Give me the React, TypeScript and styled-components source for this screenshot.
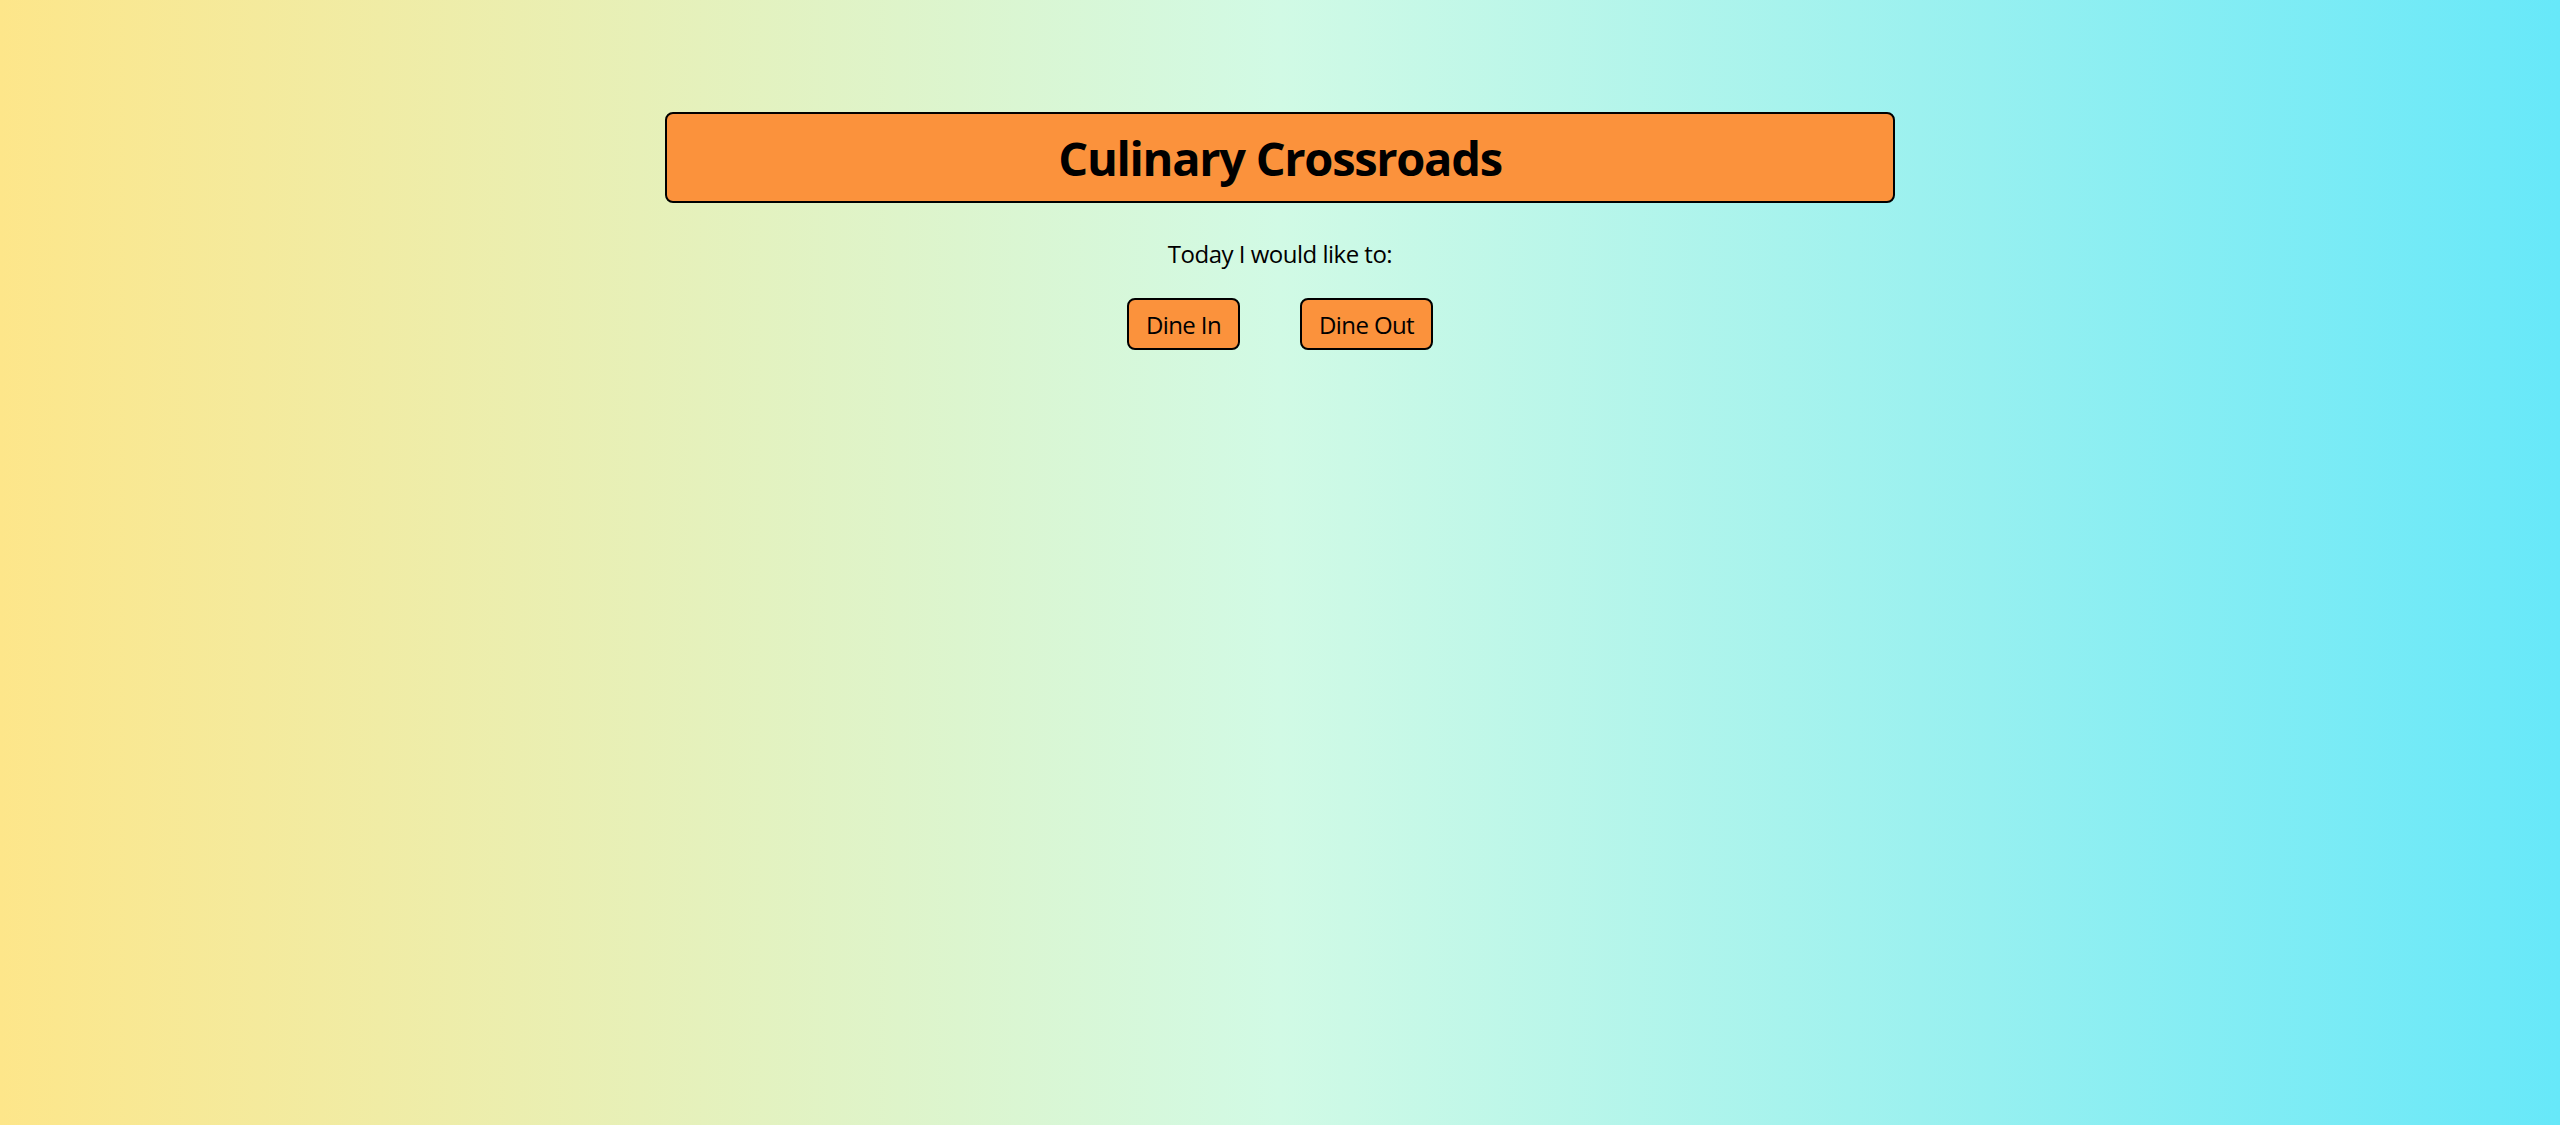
import React from "react";
import styled, { createGlobalStyle } from "styled-components";

const GlobalStyle = createGlobalStyle`
  html, body {
    margin: 0;
    padding: 0;
  }
  body {
    font-family: "Open Sans", "Noto Sans", sans-serif;
    color: #000;
  }
  * { box-sizing: border-box; }
`;

const Page = styled.div`
  min-height: 100vh;
  background: linear-gradient(to right, #fde68a, #d1fae5, #67e8f9);
  display: flex;
  flex-direction: column;
  align-items: center;
  padding-top: 112px;
`;

const Header = styled.header`
  width: 1230px;
  height: 91px;
  border: 2px solid #000;
  border-radius: 8px;
  background: #fb923c;
  display: flex;
  align-items: center;
  justify-content: center;
`;

const Title = styled.h1`
  margin: 0;
  font-size: 47px;
  font-weight: 700;
  letter-spacing: -1.3px;
`;

const Prompt = styled.p`
  margin: 32px 0 0;
  font-size: 24px;
  line-height: 38px;
  letter-spacing: -0.5px;
`;

const ButtonRow = styled.div`
  margin-top: 25px;
  display: flex;
  gap: 60px;
`;

const ChoiceButton = styled.button`
  height: 52px;
  padding: 0 17px;
  border: 2px solid #000;
  border-radius: 8px;
  background: #fb923c;
  color: #000;
  font-family: "Open Sans", "Noto Sans", sans-serif;
  font-size: 24px;
  letter-spacing: -0.6px;
  cursor: pointer;
`;

export default function App() {
  return (
    <>
      <GlobalStyle />
      <Page>
        <Header>
          <Title>Culinary Crossroads</Title>
        </Header>
        <Prompt>Today I would like to:</Prompt>
        <ButtonRow>
          <ChoiceButton>Dine In</ChoiceButton>
          <ChoiceButton>Dine Out</ChoiceButton>
        </ButtonRow>
      </Page>
    </>
  );
}
